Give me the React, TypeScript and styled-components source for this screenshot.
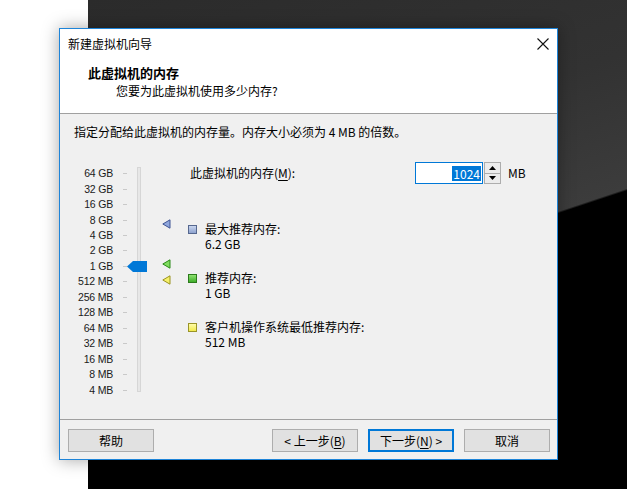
import React from 'react'
import styled, { createGlobalStyle } from 'styled-components'

const GlobalStyle = createGlobalStyle`
  html, body {
    margin: 0;
    padding: 0;
  }
  body {
    width: 627px;
    height: 489px;
    overflow: hidden;
    font-family: "Noto Sans CJK SC", "Noto Sans", sans-serif;
    font-size: 12px;
    color: #000;
  }
`

const Desktop = styled.div`
    position: relative;
    display: flex;
    width: 627px;
    height: 489px;
    background: #fff;
`
const LightStrip = styled.div`
    width: 88px;
    flex: none;
    background: #fff;
`
const DarkPane = styled.div`
    flex: 1;
    background: linear-gradient(161.6deg, #2b2b2b 0px, #323232 220px, #3c3c3c 349px, #000 351px, #000 100%);
`
const Window = styled.div`
    position: absolute;
    left: 59px;
    top: 28px;
    width: 499px;
    height: 432px;
    box-sizing: border-box;
    border: 1px solid #1e84d8;
    background: #f0f0f0;
    box-shadow: 0 0 16px rgba(0, 0, 0, .35);
    display: flex;
    flex-direction: column;
`
const TitleBar = styled.div`
    height: 30px;
    flex: none;
    display: flex;
    align-items: center;
    background: #fff;
    padding-left: 8px;
`
const TitleText = styled.span`
    flex: 1;
    line-height: 16px;
`
const CloseBtn = styled.div`
    width: 28px;
    height: 30px;
    display: flex;
    align-items: center;
    justify-content: center;
`
const Header = styled.div`
    height: 55px;
    flex: none;
    box-sizing: border-box;
    background: #fff;
    border-bottom: 1px solid #a0a0a0;
    padding: 6px 0 0 28px;
`
const Heading = styled.div`
    font-size: 13px;
    font-weight: bold;
    line-height: 16px;
`
const SubHeading = styled.div`
    margin: 2px 0 0 28px;
    line-height: 16px;
`
const Body = styled.div`
    flex: 1;
    display: flex;
    flex-direction: column;
`
const Instruction = styled.div`
    padding: 10px 14px 0;
    line-height: 16px;
`
const Main = styled.div`
    display: flex;
    margin-top: 22px;
`

/* slider */
const SliderBox = styled.div`
    position: relative;
    display: flex;
    align-items: flex-start;
    width: 128px;
    flex: none;
    padding-top: 4px;
`
const ScaleList = styled.div`
    display: grid;
    grid-template-columns: 53px 4px;
    column-gap: 10px;
    grid-auto-rows: 15.46px;
    align-items: center;
`
const ScaleLabel = styled.span`
    text-align: right;
    font-family: "Liberation Sans", Arial, sans-serif;
    font-size: 10.5px;
    letter-spacing: -0.2px;
    color: #1a1a1a;
    line-height: 15px;
`
const Tick = styled.span`
    height: 1px;
    background: #c9c9c9;
`
const Track = styled.div`
    margin: 1px 0 0 10px;
    width: 4px;
    height: 225px;
    box-sizing: border-box;
    border: 1px solid #d6d6d6;
    background: #e7e7e7;
`
const Thumb = styled.svg`
    position: absolute;
    left: 67px;
`
const Marker = styled.svg`
    position: absolute;
    left: 102px;
`

/* right column */
const RightCol = styled.div`
    display: flex;
    flex-direction: column;
`
const MemoryRow = styled.div`
    display: flex;
    align-items: center;
    height: 22px;
`
const MemLabel = styled.span`
    width: 225px;
    margin-left: 2px;
    line-height: 16px;
`
const Mnemonic = styled.span`
    text-decoration: underline;
    text-underline-offset: 2px;
`
const NumberBox = styled.div`
    width: 68px;
    height: 22px;
    box-sizing: border-box;
    border: 1px solid #0078d7;
    background: #fff;
    display: flex;
    align-items: center;
    justify-content: flex-end;
    padding-right: 1px;
`
const Selected = styled.span`
    background: #0078d7;
    color: #fff;
    line-height: 15px;
    padding: 0 1px;
`
const Spin = styled.div`
    width: 17px;
    height: 22px;
    margin-left: 1px;
    display: flex;
    flex-direction: column;
`
const SpinButton = styled.div<{ $down?: boolean }>`
    flex: 1;
    box-sizing: border-box;
    border: 1px solid #adadad;
    border-top-width: ${p => (p.$down ? 0 : 1)}px;
    background: #ececec;
    display: flex;
    align-items: center;
    justify-content: center;
`
const Unit = styled.span`
    margin-left: 7px;
    line-height: 16px;
`
const Legend = styled.div`
    margin-top: 37px;
    display: flex;
    flex-direction: column;
    gap: 19px;
`
const LegendItem = styled.div`
    display: flex;
    align-items: flex-start;
`
const Swatch = styled.span<{ $fill: string; $edge: string }>`
    width: 9px;
    height: 9px;
    margin-top: 3.5px;
    flex: none;
    box-sizing: border-box;
    border: 1px solid ${p => p.$edge};
    background: ${p => p.$fill};
`
const LegendText = styled.div`
    margin-left: 8px;
    line-height: 15px;
`

/* footer */
const Footer = styled.div`
    flex: none;
    border-top: 1px solid #a0a0a0;
    display: flex;
    align-items: center;
    gap: 10px;
    padding: 9px 7px 7px 8px;
`
const Spacer = styled.div`
    flex: 1;
`
const Button = styled.div<{ $primary?: boolean }>`
    width: 86px;
    height: 23px;
    box-sizing: border-box;
    border: ${p => (p.$primary ? '2px solid #0078d7' : '1px solid #adadad')};
    background: #e1e1e1;
    display: flex;
    align-items: center;
    justify-content: center;
    line-height: 16px;
`

const scale = ['64 GB', '32 GB', '16 GB', '8 GB', '4 GB', '2 GB', '1 GB', '512 MB', '256 MB', '128 MB', '64 MB', '32 MB', '16 MB', '8 MB', '4 MB']

// position on the slider for a value in GB (64 GB at top, log scale)
const posOf = (gb: number) => 11.73 + (6 - Math.log2(gb)) * 15.46

const markers = [
  { gb: 6.2, fill: '#8fa6dc', edge: '#3f5593' },
  { gb: 1, fill: '#7fdc5e', edge: '#2a8a18' },
  { gb: 0.5, fill: '#f6f16a', edge: '#9a9220' },
]

const legend = [
  { title: '最大推荐内存:', value: '6.2 GB', fill: 'linear-gradient(#c9d5ee, #8ea3cf)', edge: '#56688f' },
  { title: '推荐内存:', value: '1 GB', fill: 'linear-gradient(#8fe271, #3fae2a)', edge: '#2c7a1c' },
  { title: '客户机操作系统最低推荐内存:', value: '512 MB', fill: 'linear-gradient(#fffca8, #f2ea4c)', edge: '#9a9428' },
]

function App() {
  const memGb = 1

  return (
    <>
      <GlobalStyle />
      <Desktop>
        <LightStrip />
        <DarkPane />
        <Window>
          <TitleBar>
            <TitleText>新建虚拟机向导</TitleText>
            <CloseBtn>
              <svg width="12" height="12" viewBox="0 0 12 12">
                <path d="M0.5 0.5 L11.5 11.5 M11.5 0.5 L0.5 11.5" stroke="#111" strokeWidth="1.1" fill="none" />
              </svg>
            </CloseBtn>
          </TitleBar>
          <Header>
            <Heading>此虚拟机的内存</Heading>
            <SubHeading>您要为此虚拟机使用多少内存?</SubHeading>
          </Header>
          <Body>
            <Instruction>指定分配给此虚拟机的内存量。内存大小必须为 4 MB 的倍数。</Instruction>
            <Main>
              <SliderBox>
                <ScaleList>
                  {scale.map(s => (
                    <React.Fragment key={s}>
                      <ScaleLabel>{s}</ScaleLabel>
                      <Tick />
                    </React.Fragment>
                  ))}
                </ScaleList>
                <Track />
                {markers.map(m => (
                  <Marker key={m.gb} width="9" height="10" viewBox="0 0 9 10" style={{ top: posOf(m.gb) - 7 }}>
                    <path d="M8 0.8 L8 9.2 L0.8 5 Z" fill={m.fill} stroke={m.edge} strokeWidth="1" strokeLinejoin="round" />
                  </Marker>
                ))}
                <Thumb width="20" height="11" viewBox="0 0 20 11" style={{ top: posOf(memGb) - 5.5 }}>
                  <path d="M0 5.5 L6 0 H20 V11 H6 Z" fill="#0078d7" />
                </Thumb>
              </SliderBox>
              <RightCol>
                <MemoryRow>
                  <MemLabel>此虚拟机的内存(<Mnemonic>M</Mnemonic>):</MemLabel>
                  <NumberBox>
                    <Selected>1024</Selected>
                  </NumberBox>
                  <Spin>
                    <SpinButton>
                      <svg width="7" height="4" viewBox="0 0 7 4"><path d="M3.5 0 L7 4 H0 Z" fill="#000" /></svg>
                    </SpinButton>
                    <SpinButton $down>
                      <svg width="7" height="4" viewBox="0 0 7 4"><path d="M0 0 H7 L3.5 4 Z" fill="#000" /></svg>
                    </SpinButton>
                  </Spin>
                  <Unit>MB</Unit>
                </MemoryRow>
                <Legend>
                  {legend.map(l => (
                    <LegendItem key={l.title}>
                      <Swatch $fill={l.fill} $edge={l.edge} />
                      <LegendText>
                        <div>{l.title}</div>
                        <div>{l.value}</div>
                      </LegendText>
                    </LegendItem>
                  ))}
                </Legend>
              </RightCol>
            </Main>
          </Body>
          <Footer>
            <Button>帮助</Button>
            <Spacer />
            <Button>&lt; 上一步(<Mnemonic>B</Mnemonic>)</Button>
            <Button $primary>下一步(<Mnemonic>N</Mnemonic>) &gt;</Button>
            <Button>取消</Button>
          </Footer>
        </Window>
      </Desktop>
    </>
  )
}

export default App
